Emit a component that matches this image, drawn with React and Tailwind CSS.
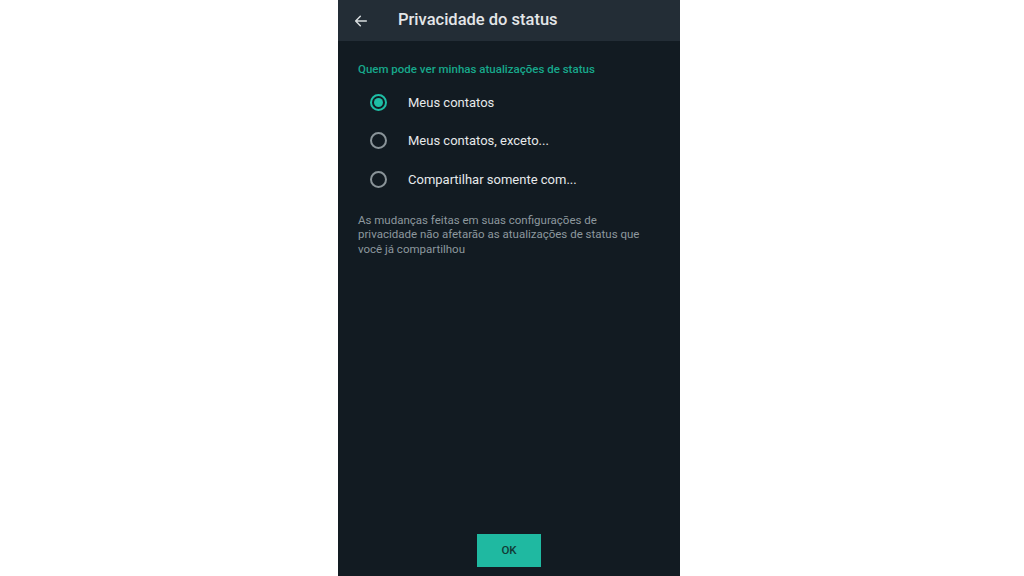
import React, { useState } from 'react';

const options = ['Meus contatos', 'Meus contatos, exceto...', 'Compartilhar somente com...'];

const Radio = ({ checked }) => (
    <span
        className={`flex h-[17px] w-[17px] items-center justify-center rounded-full border-2 ${
            checked ? 'border-[#1ebea5]' : 'border-[#8a9499]'
        }`}
    >
        {checked && <span className="h-[9px] w-[9px] rounded-full bg-[#1ebea5]" />}
    </span>
);

const App = () => {
    const [selected, setSelected] = useState(0);

    return (
        <div className="flex h-[576px] w-[1024px] bg-white pl-[338px] font-['Roboto',sans-serif]">
            <div className="flex w-[342px] flex-col bg-[#121b22]">
                {/* Header */}
                <div className="flex h-[41px] items-center bg-[#232d36] pl-[15px]">
                    <svg width="16" height="16" viewBox="0 0 24 24" fill="none" stroke="#d9dee0" strokeWidth="2.2" strokeLinecap="round" strokeLinejoin="round">
                        <path d="M20 12H4M11 5l-7 7 7 7" />
                    </svg>
                    <span className="ml-[29px] text-[16.5px] font-medium text-[#e3e6e8]">
                        Privacidade do status
                    </span>
                </div>

                {/* Content */}
                <div className="flex flex-1 flex-col px-[20px] pt-[21px]">
                    <div className="text-[11.5px] font-medium leading-[14px] text-[#17a88b]">
                        Quem pode ver minhas atualizações de status
                    </div>
                    <div className="mt-[7px] flex flex-col">
                        {options.map((label, index) => (
                            <button
                                key={index}
                                onClick={() => setSelected(index)}
                                className="flex h-[38.5px] items-center pl-[12px] text-left"
                            >
                                <Radio checked={selected === index} />
                                <span className="ml-[21px] text-[13px] text-[#e6e9eb]">{label}</span>
                            </button>
                        ))}
                    </div>
                    <p className="mt-[14px] pr-[10px] text-[11.5px] leading-[14.5px] text-[#8d989e]">
                        As mudanças feitas em suas configurações de privacidade não afetarão as atualizações de status que você já compartilhou
                    </p>
                    <div className="mt-auto flex justify-center pb-[9px]">
                        <button className="flex h-[33px] w-[64px] items-center justify-center bg-[#1fb9a1] text-[11.5px] font-medium text-[#123a36]">
                            OK
                        </button>
                    </div>
                </div>
            </div>
        </div>
    );
};

export default App;
